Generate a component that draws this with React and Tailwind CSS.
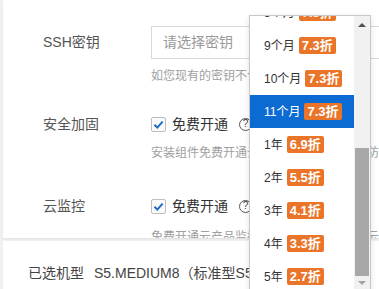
import React from "react";

const items = [
  ["8个月", "7.3折"],
  ["9个月", "7.3折"],
  ["10个月", "7.3折"],
  ["11个月", "7.3折", true],
  ["1年", "6.9折"],
  ["2年", "5.5折"],
  ["3年", "4.1折"],
  ["4年", "3.3折"],
  ["5年", "2.7折"],
];

function Check() {
  return (
    <span className="w-[15px] h-[15px] shrink-0 border border-[#bdbdbd] rounded-[2px] bg-[#fafafa] flex items-center justify-center">
      <svg width="13" height="13" viewBox="0 0 13 13">
        <path d="M2.5 6.8 L5.3 9.6 L10.6 3.6" fill="none" stroke="#1a6cc6" strokeWidth="2" />
      </svg>
    </span>
  );
}

function Help() {
  return (
    <span className="ml-[11px] w-[13px] h-[13px] shrink-0 rounded-full border border-[#555] text-[#444] text-[10px] leading-none flex items-center justify-center">
      ?
    </span>
  );
}

export default function App() {
  return (
    <div className="relative w-[379px] h-[289px] overflow-hidden bg-[#f1f1f1] [font-family:'Liberation_Sans','Noto_Sans_CJK_SC',sans-serif]">
      <div className="ml-[3px] h-[238px] bg-white overflow-hidden pt-[26px] pl-[40px] shadow-[0_1px_2px_rgba(0,0,0,0.08)]">
        <div className="flex items-center h-[33px]">
          <div className="w-[108px] shrink-0 text-[14px] text-[#555]">SSH密钥</div>
          <div className="w-[260px] shrink-0 h-[33px] border border-[#d9d9d9] flex items-center pl-[11px] text-[14px] text-[#999]">
            请选择密钥
          </div>
        </div>
        <div className="pl-[108px] mt-[9px] text-[12px] leading-[16px] text-[#a0a0a0] whitespace-nowrap">
          如您现有的密钥不合适，可以前往
        </div>
        <div className="flex items-center h-[20px] mt-[30px]">
          <div className="w-[108px] shrink-0 text-[14px] text-[#555]">安全加固</div>
          <Check />
          <span className="ml-[6px] text-[14px] text-[#333] whitespace-nowrap">免费开通</span>
          <Help />
        </div>
        <div className="pl-[108px] mt-[11px] text-[12px] leading-[16px] text-[#a0a0a0] whitespace-nowrap">
          安装组件免费开通云安全中心基础版本的防护
        </div>
        <div className="flex items-center h-[20px] mt-[35px]">
          <div className="w-[108px] shrink-0 text-[14px] text-[#555]">云监控</div>
          <Check />
          <span className="ml-[6px] text-[14px] text-[#333] whitespace-nowrap">免费开通</span>
          <Help />
        </div>
        <div className="pl-[108px] mt-[13px] text-[12px] leading-[16px] text-[#a0a0a0] whitespace-nowrap">
          免费开通云产品监控，实时查看主机性能云监控
        </div>
      </div>
      <div className="mt-[3px] ml-[3px] h-[48px] bg-white pt-[22px] pl-[25px] text-[14px] leading-[20px] text-[#444] whitespace-nowrap flex">
        <span>已选机型</span>
        <span className="ml-[10px]">S5.MEDIUM8（标准型S5，2核8GB）</span>
      </div>

      <div className="absolute left-[249px] top-[15px] w-[122px] h-[290px] border border-[#c8c8c8] bg-white shadow-[0_2px_6px_rgba(0,0,0,0.12)] flex overflow-hidden">
        <div className="flex-1 overflow-hidden">
          <div className="-mt-[20px]">
            {items.map(([label, disc, active]) => (
              <div
                key={label}
                className={
                  "h-[33px] flex items-center pl-[14px] text-[12px] whitespace-nowrap " +
                  (active ? "bg-[#0b6bd3] text-white" : "text-[#333]")
                }
              >
                <span>{label}</span>
                <span className="ml-[4px] h-[17px] px-[3px] rounded-[2px] bg-[#ea7428] text-white text-[13px] font-bold flex items-center">
                  {disc}
                </span>
              </div>
            ))}
          </div>
        </div>
        <div className="w-[16px] shrink-0 bg-[#f1f1f1] flex flex-col">
          <div className="h-[17px] flex items-center justify-center">
            <span className="w-0 h-0 border-l-[4px] border-r-[4px] border-b-[4px] border-l-transparent border-r-transparent border-b-[#505050]" />
          </div>
          <div className="h-[115px]" />
          <div className="h-[128px] mx-[1px] bg-[#a8a8a8]" />
          <div className="h-[14px] flex items-center justify-center">
            <span className="w-0 h-0 border-l-[4px] border-r-[4px] border-t-[4px] border-l-transparent border-r-transparent border-t-[#a3a3a3]" />
          </div>
        </div>
      </div>
    </div>
  );
}
